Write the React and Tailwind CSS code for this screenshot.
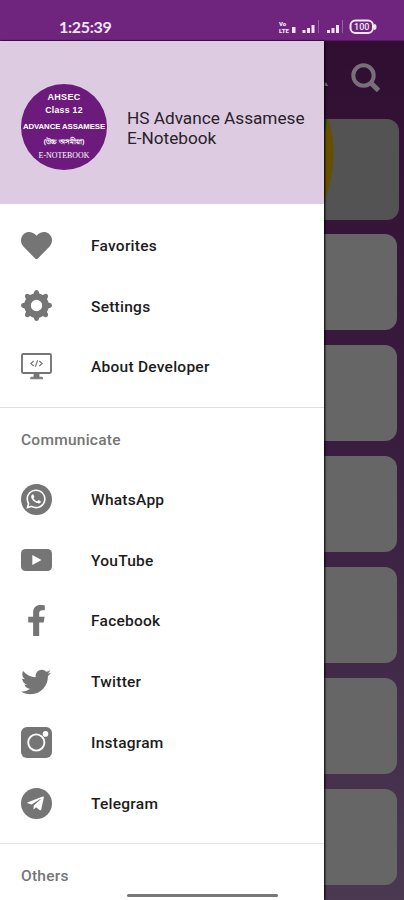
import React from 'react';
import { FaFacebookF, FaHeart, FaTwitter, FaWhatsapp, FaTelegramPlane } from 'react-icons/fa';

const teeth = [0, 45, 90, 135, 180, 225, 270, 315];

function GearIcon() {
    return (
        <svg viewBox="0 0 30 30" className="-mt-px h-[31px] w-[31px]">
            {teeth.map((angle) => (
                <path key={angle} d="M11.5 6 L12.7 2 Q13.2 0 15 0 Q16.8 0 17.3 2 L18.5 6 Z" fill="currentColor" transform={`rotate(${angle} 15 15)`} />
            ))}
            <circle cx="15" cy="15" r="8.7" fill="none" stroke="currentColor" strokeWidth="6.4" />
        </svg>
    );
}

function MonitorIcon() {
    return (
        <svg viewBox="0 0 31 28" className="h-7 w-[31px]" fill="none" stroke="currentColor">
            <rect x="1" y="1" width="29" height="19" rx="1.2" strokeWidth="1.9" />
            <path d="M13 20.5h5v3.7h3q.8 0 .8 1.6H9.500q0-1.600.8-1.600H13Z" fill="currentColor" strokeWidth=".8" />
            <path d="M12.700 8 L9.800 10.500 L12.700 13 M18.300 8 L21.200 10.500 L18.300 13 M16.600 7.300 L14.400 13.700" strokeWidth="1.100" />
        </svg>
    );
}

function WhatsAppIcon() {
    return (
        <div className="flex h-[31px] w-[31px] items-center justify-center rounded-full bg-[#757575]">
            <FaWhatsapp className="h-[22px] w-[22px] text-white" />
        </div>
    );
}

function YouTubeIcon() {
    return (
        <svg viewBox="0 0 31 22" className="h-[22px] w-[31px]">
            <rect width="31" height="22" rx="4.5" fill="currentColor" />
            <path d="M11.300 6 L20.500 11 L11.300 16 Z" fill="#fff" />
        </svg>
    );
}

function InstagramIcon() {
    return (
        <svg viewBox="0 0 31 31" className="h-[31px] w-[31px]">
            <rect width="31" height="31" rx="6" fill="currentColor" />
            <circle cx="15.300" cy="15.500" r="8.100" fill="none" stroke="#fff" strokeWidth="1.900" />
            <circle cx="24.500" cy="6.900" r="2.800" fill="#fff" />
        </svg>
    );
}

function TelegramIcon() {
    return (
        <div className="flex h-[31px] w-[31px] items-center justify-center rounded-full bg-[#757575]">
            <FaTelegramPlane className="mr-0.5 h-[19px] w-[19px] text-white" />
        </div>
    );
}

const mainItems = [
    { label: 'Favorites', icon: <FaHeart className="h-[31px] w-[31px]" /> },
    { label: 'Settings', icon: <GearIcon /> },
    { label: 'About Developer', icon: <MonitorIcon /> },
];

const communicateItems = [
    { label: 'WhatsApp', icon: <WhatsAppIcon /> },
    { label: 'YouTube', icon: <YouTubeIcon /> },
    { label: 'Facebook', icon: <FaFacebookF className="h-[31px] w-[31px]" /> },
    { label: 'Twitter', icon: <FaTwitter className="h-[30px] w-[30px]" /> },
    { label: 'Instagram', icon: <InstagramIcon /> },
    { label: 'Telegram', icon: <TelegramIcon /> },
];

function MenuItem({ item }) {
    return (
        <div className="flex h-[60.8px] items-center pl-5">
            <div className="flex w-8 shrink-0 justify-center text-[#757575]">{item.icon}</div>
            <span className="ml-[39px] pt-0.5 text-[15.5px] font-medium tracking-[0.25px] text-[#1c1c1c]">{item.label}</span>
        </div>
    );
}

function StatusBar() {
    return (
        <div className="flex h-[41px] shrink-0 items-center justify-between border-b border-[#5b1768] bg-[#6f257d] pt-[13px] pr-[27px] pl-[59px] text-[#f2e6f4]">
            <span className="font-['Lato'] text-[16px] leading-5 font-bold tracking-[-0.3px]">1:25:39</span>
            <div className="flex items-center">
                <div className="flex w-[13px] flex-col font-black">
                    <span className="text-[6px] leading-[7px]">Vo</span>
                    <span className="text-[6px] leading-[7px]">LTE</span>
                </div>
                <svg viewBox="13 0 85 16" className="h-4 w-[85px]" fill="currentColor">
                    <path d="M13 8h3.500v6h-3.500ZM23.500 11h3v3h-3ZM28 9h3v5h-3ZM32.500 6h3v8h-3ZM48 11h3v3H48ZM52.500 9h3v5h-3ZM57 6h3v8h-3Z" />
                    <path d="M39 1h1v13h-1ZM63 1h1v13h-1Z" opacity=".3" />
                    <rect x="71.500" y="1.500" width="22.500" height="12.500" rx="5" fill="none" stroke="currentColor" strokeWidth="2" />
                    <path d="M95 5q2.500 0 2.500 3t-2.500 3Z" />
                    <text x="82.700" y="11" fontSize="9" fontWeight="500" textAnchor="middle" fontFamily="Roboto, sans-serif">100</text>
                </svg>
            </div>
        </div>
    );
}

function DrawerHeader() {
    return (
        <div className="flex h-[163px] shrink-0 items-center bg-[#ddcbe1] pl-[21px]">
            <div className="mt-2 flex h-[86px] w-[86px] shrink-0 flex-col items-center overflow-hidden rounded-full bg-[#6c1b7c] pt-[6px] font-['DejaVu_Sans'] font-bold whitespace-nowrap text-white">
                <span className="font-['Liberation_Sans'] text-[9px] leading-[14px] tracking-[0.3px]">AHSEC</span>
                <span className="font-['Liberation_Sans'] text-[8.7px] leading-[13px] tracking-[0.3px]">Class 12</span>
                <span className="mt-[3px] font-['Liberation_Sans'] text-[7.8px] leading-[14px] tracking-[-0.1px]">ADVANCE ASSAMESE</span>
                <span className="mt-px font-['Noto_Sans'] text-[7px] leading-[14px]">(উচ্চ অসমীয়া)</span>
                <span className="font-['Liberation_Serif'] text-[7.9px] leading-[14px] font-normal">E-NOTEBOOK</span>
            </div>
            <div className="mt-[11px] ml-5 text-[17.2px] leading-[20.5px] text-[#29222b]">
                HS Advance Assamese
                <br />
                E-Notebook
            </div>
        </div>
    );
}

function Drawer() {
    return (
        <div className="relative z-10 flex w-[324px] shrink-0 flex-col overflow-hidden bg-white shadow-[1px_0_2px_#000]">
            <DrawerHeader />
            <div className="h-[204px] shrink-0 border-b border-[#dedede] pt-[11px]">
                {mainItems.map((item) => (
                    <MenuItem key={item.label} item={item} />
                ))}
            </div>
            <div className="h-[436px] shrink-0 border-b border-[#e7e7e7]">
                <h2 className="h-[61px] pt-[22px] pl-[21px] text-[15.5px] leading-5 font-medium tracking-[0.25px] text-[#757575]">Communicate</h2>
                {communicateItems.map((item) => (
                    <MenuItem key={item.label} item={item} />
                ))}
            </div>
            <h2 className="pt-[22px] pl-[21px] text-[15.5px] leading-5 font-medium tracking-[0.25px] text-[#757575]">Others</h2>
        </div>
    );
}

// Dimmed home screen that stays visible next to the open drawer
function Backdrop() {
    return (
        <div className="flex w-20 flex-col overflow-hidden bg-linear-to-b from-[#300e32] via-[#3a1e40] to-[#4a3951]">
            <div className="flex h-[78px] shrink-0 items-center justify-between pr-[23px]">
                <svg viewBox="0 0 5 14" className="h-3.5 w-[5px]">
                    <path d="M0 9.500 L2 9.500 L4 13 L0 13 Z" fill="#777079" />
                </svg>
                <svg viewBox="0 0 30 30" className="mt-[-5px] h-[30px] w-[30px]" fill="none" stroke="#777079">
                    <circle cx="12.500" cy="12.500" r="10.200" strokeWidth="4" />
                    <path d="M19.500 19.500 L27.500 27.500" strokeWidth="5" />
                </svg>
            </div>
            <div className="mr-[5px] h-[101px] shrink-0 overflow-hidden rounded-r-xl bg-[#535353]">
                <svg viewBox="0 0 75 101" className="h-[101px] w-[75px]">
                    <path d="M0 0 H5 Q16 42 0 83 Z" fill="#665000" />
                    <path d="M0 0 H3 L2 9 L0 14 Z" fill="#095443" />
                </svg>
            </div>
            <div className="mt-3.5 mr-[7px] flex flex-col gap-[15px]">
                {[1, 2, 3, 4, 5, 6].map((card) => (
                    <div key={card} className="h-24 shrink-0 rounded-r-xl bg-[#666666]" />
                ))}
            </div>
        </div>
    );
}

function App() {
    return (
        <div className="relative flex h-[900px] w-[404px] flex-col overflow-hidden bg-white font-['Roboto',sans-serif]">
            <StatusBar />
            <div className="flex min-h-0 flex-1">
                <Drawer />
                <Backdrop />
            </div>
            <div className="absolute bottom-[3px] left-[127px] z-20 h-[3px] w-[151px] rounded-full bg-[#777777]" />
        </div>
    );
}

export default App;
